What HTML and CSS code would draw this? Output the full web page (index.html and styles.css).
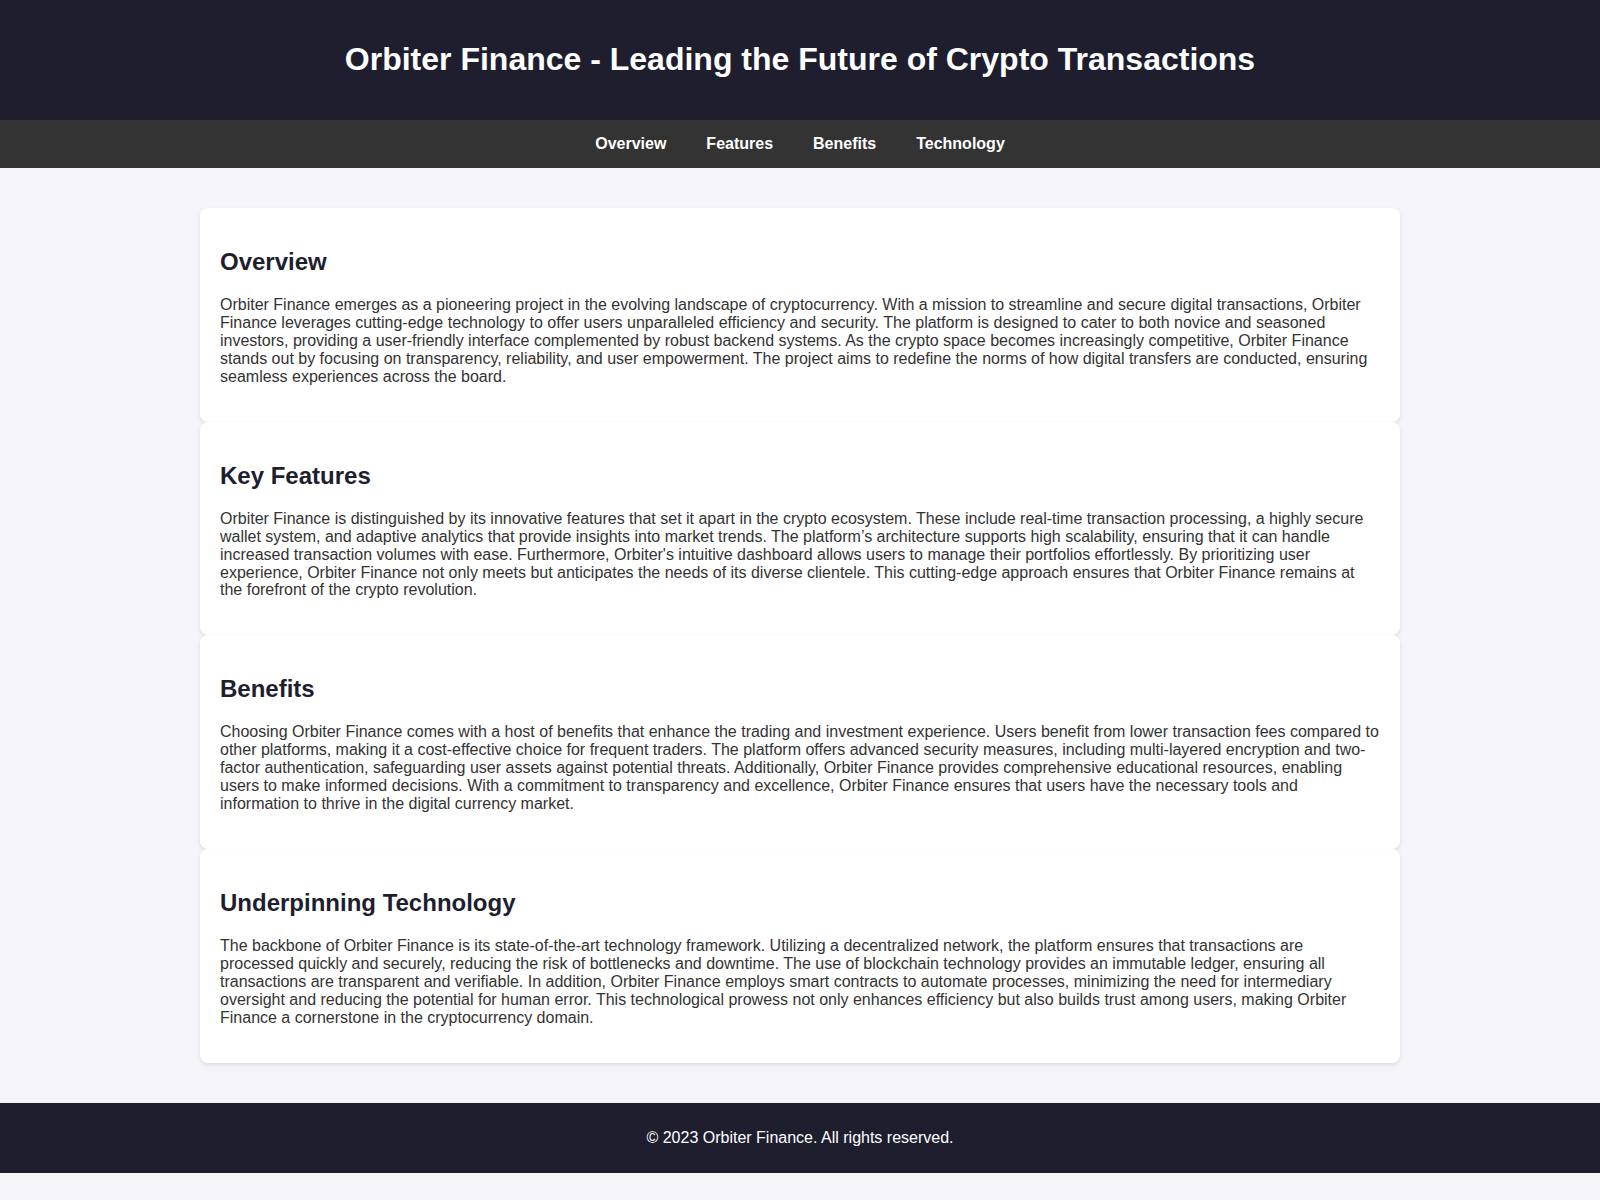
FILE: index.html
```html
<!DOCTYPE html>
<html lang="en">
<head>
<meta charset="UTF-8">
<title>Orbiter Finance</title>
<link rel="stylesheet" href="styles.css">
</head>
<body>
<header class="site-header">
  <h1 class="site-title">Orbiter Finance - Leading the Future of Crypto Transactions</h1>
</header>
<nav class="site-nav">
  <a href="#overview">Overview</a>
  <a href="#features">Features</a>
  <a href="#benefits">Benefits</a>
  <a href="#technology">Technology</a>
</nav>
<main class="container">
  <section class="card" id="overview">
    <h2>Overview</h2>
    <p>Orbiter Finance emerges as a pioneering project in the evolving landscape of cryptocurrency. With a mission to streamline and secure digital transactions, Orbiter Finance leverages cutting-edge technology to offer users unparalleled efficiency and security. The platform is designed to cater to both novice and seasoned investors, providing a user-friendly interface complemented by robust backend systems. As the crypto space becomes increasingly competitive, Orbiter Finance stands out by focusing on transparency, reliability, and user empowerment. The project aims to redefine the norms of how digital transfers are conducted, ensuring seamless experiences across the board.</p>
  </section>
  <section class="card" id="features">
    <h2>Key Features</h2>
    <p>Orbiter Finance is distinguished by its innovative features that set it apart in the crypto ecosystem. These include real-time transaction processing, a highly secure wallet system, and adaptive analytics that provide insights into market trends. The platform’s architecture supports high scalability, ensuring that it can handle increased transaction volumes with ease. Furthermore, Orbiter's intuitive dashboard allows users to manage their portfolios effortlessly. By prioritizing user experience, Orbiter Finance not only meets but anticipates the needs of its diverse clientele. This cutting-edge approach ensures that Orbiter Finance remains at the forefront of the crypto revolution.</p>
  </section>
  <section class="card" id="benefits">
    <h2>Benefits</h2>
    <p>Choosing Orbiter Finance comes with a host of benefits that enhance the trading and investment experience. Users benefit from lower transaction fees compared to other platforms, making it a cost-effective choice for frequent traders. The platform offers advanced security measures, including multi-layered encryption and two-factor authentication, safeguarding user assets against potential threats. Additionally, Orbiter Finance provides comprehensive educational resources, enabling users to make informed decisions. With a commitment to transparency and excellence, Orbiter Finance ensures that users have the necessary tools and information to thrive in the digital currency market.</p>
  </section>
  <section class="card" id="technology">
    <h2>Underpinning Technology</h2>
    <p>The backbone of Orbiter Finance is its state-of-the-art technology framework. Utilizing a decentralized network, the platform ensures that transactions are processed quickly and securely, reducing the risk of bottlenecks and downtime. The use of blockchain technology provides an immutable ledger, ensuring all transactions are transparent and verifiable. In addition, Orbiter Finance employs smart contracts to automate processes, minimizing the need for intermediary oversight and reducing the potential for human error. This technological prowess not only enhances efficiency but also builds trust among users, making Orbiter Finance a cornerstone in the cryptocurrency domain.</p>
  </section>
</main>
<footer class="site-footer">
  <p>&copy; 2023 Orbiter Finance. All rights reserved.</p>
</footer>
</body>
</html>
```

FILE: styles.css
```css
html, body {
  margin: 0;
  padding: 0;
}

body {
  font-family: "Liberation Sans", Arial, sans-serif;
  font-size: 16px;
  background: #f4f4f9;
  color: #333;
}

.site-header {
  background: #1e1e2f;
  color: #fff;
  text-align: center;
  padding: 20px 0;
}

.site-title {
  font-size: 32px;
  font-weight: bold;
  margin: 21.44px 0;
}

.site-nav {
  background: #333;
  display: flex;
  justify-content: center;
  padding: 15px 0;
}

.site-nav a {
  color: #fff;
  font-weight: bold;
  text-decoration: none;
  margin: 0 20px;
}

.container {
  max-width: 1200px;
  margin: 40px auto;
}

.card {
  background: #fff;
  border-radius: 8px;
  box-shadow: 0 2px 4px rgba(0, 0, 0, 0.1);
  padding: 20px;
}

.card h2 {
  font-size: 24px;
  color: #1e1e2f;
  margin: 20px 0;
}

.card p {
  line-height: 17.95px;
  margin: 16px 0;
}

.site-footer {
  background: #1e1e2f;
  color: #fff;
  text-align: center;
  padding: 10px 0;
}

.site-footer p {
  margin: 16px 0;
}
```
